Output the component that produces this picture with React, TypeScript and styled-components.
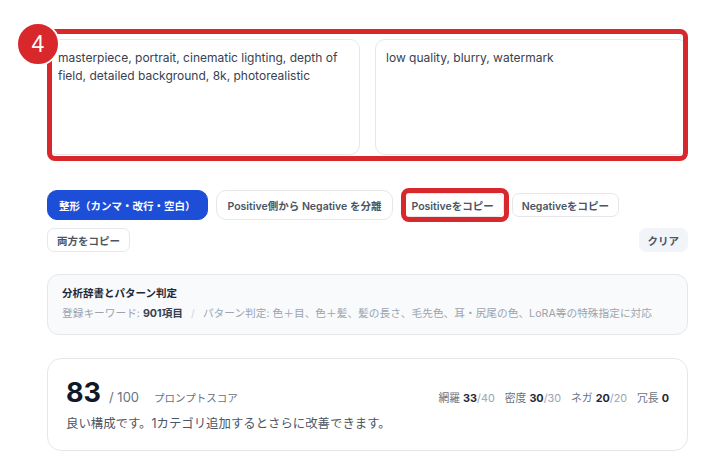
import { createGlobalStyle, styled } from 'styled-components';

const GlobalStyle = createGlobalStyle`
  body {
    margin: 0;
    background: #ffffff;
    font-family: Inter, "Noto Sans CJK JP", sans-serif;
    color: #1f2937;
  }
`;

const Page = styled.div`
  width: 641px;
  padding: 39px 32px 0 47px;
`;

const EditorGrid = styled.div`
  position: relative;
  display: grid;
  grid-template-columns: 1fr 1fr;
  gap: 15px;
`;

const PromptBox = styled.textarea`
  box-sizing: border-box;
  height: 116px;
  padding: 9px 10px;
  border: 1px solid #e5e7eb;
  border-radius: 10px;
  resize: none;
  font-family: Inter, "Noto Sans CJK JP", sans-serif;
  font-size: 12px;
  line-height: 18px;
  color: #374151;
  background: #ffffff;
  outline: none;
`;

const Highlight = styled.div<{ $inset: string }>`
  position: absolute;
  inset: ${(p) => p.$inset};
  border: 5px solid #d9282c;
  border-radius: 8px;
  pointer-events: none;
`;

const StepBadge = styled.div`
  position: absolute;
  left: -31px;
  top: -17px;
  width: 40px;
  height: 40px;
  border-radius: 50%;
  border: 2px solid #ffffff;
  background: #d9282c;
  color: #ffffff;
  font-family: "Liberation Sans", Arial, sans-serif;
  font-size: 23px;
  display: flex;
  align-items: center;
  justify-content: center;
`;

const Toolbar = styled.div`
  margin-top: 35px;
  display: flex;
  flex-wrap: wrap;
  align-items: center;
  gap: 8px;
`;

type Variant = 'primary' | 'outline' | 'small' | 'muted';

const isLarge = (v?: Variant) => v === 'primary' || v === 'outline';

const Button = styled.button<{ $variant?: Variant }>`
  position: relative;
  box-sizing: border-box;
  font-family: Inter, "Noto Sans CJK JP", sans-serif;
  font-weight: 600;
  font-size: 10.5px;
  cursor: pointer;
  white-space: nowrap;
  height: ${(p) => (isLarge(p.$variant) ? '30px' : '24px')};
  padding: ${(p) => (isLarge(p.$variant) ? '0 11px' : '0 9px')};
  border-radius: ${(p) => (isLarge(p.$variant) ? '10px' : '7px')};
  border: 1px solid
    ${(p) => (p.$variant === 'primary' ? '#1d4ed8' : p.$variant === 'muted' ? '#f1f5f9' : '#e5e7eb')};
  background: ${(p) => (p.$variant === 'primary' ? '#1d4ed8' : p.$variant === 'muted' ? '#f1f5f9' : '#ffffff')};
  color: ${(p) => (p.$variant === 'primary' ? '#ffffff' : '#4b5563')};
  ${(p) => p.$variant === 'muted' && 'margin-left: auto; padding: 0 8px;'}
`;

const InfoCard = styled.div`
  margin-top: 22px;
  padding: 11px 14px 12px;
  border: 1px solid #e5e7eb;
  border-radius: 12px;
  background: #f8fafc;
  display: flex;
  flex-direction: column;
  gap: 4px;
`;

const InfoTitle = styled.div`
  font-size: 10.5px;
  line-height: 16px;
  font-weight: 700;
  color: #1f2937;
`;

const InfoLine = styled.div`
  font-size: 10.7px;
  line-height: 16px;
  color: #9ca3af;
  white-space: nowrap;
`;

const Strong = styled.b`
  font-weight: 700;
  color: #374151;
`;

const Slash = styled.span`
  margin: 0 8px;
  color: #d1d5db;
`;

const ScoreCard = styled.div`
  margin-top: 23px;
  padding: 18px 18px 17px;
  border: 1px solid #e5e7eb;
  border-radius: 14px;
  background: #ffffff;
  display: flex;
  flex-direction: column;
  gap: 6px;
`;

const ScoreRow = styled.div`
  display: flex;
  align-items: baseline;
  height: 32px;
`;

const ScoreValue = styled.span`
  font-size: 27px;
  line-height: 32px;
  font-weight: 700;
  color: #111827;
`;

const ScoreMax = styled.span`
  margin-left: 8px;
  font-size: 13px;
  color: #6b7280;
`;

const ScoreLabel = styled.span`
  margin-left: 15px;
  font-size: 10.5px;
  color: #6b7280;
`;

const Stats = styled.div`
  margin-left: auto;
  display: flex;
  gap: 10px;
  font-size: 10.8px;
`;

const Stat = styled.span`
  color: #6b7280;
`;

const StatNum = styled.b`
  font-weight: 700;
  color: #1f2937;
`;

const StatMax = styled.span`
  color: #9ca3af;
`;

const Summary = styled.div`
  font-size: 12.4px;
  line-height: 18px;
  color: #4b5563;
`;

const stats = [
  { label: '網羅', value: 33, max: 40 },
  { label: '密度', value: 30, max: 30 },
  { label: 'ネガ', value: 20, max: 20 },
  { label: '冗長', value: 0 },
];

export default function App() {
  return (
    <>
      <GlobalStyle />
      <Page>
        <EditorGrid>
          <PromptBox
            readOnly
            value="masterpiece, portrait, cinematic lighting, depth of field, detailed background, 8k, photorealistic"
          />
          <PromptBox readOnly value="low quality, blurry, watermark" />
          <Highlight $inset="-10px 0 -6px 0" />
          <StepBadge>4</StepBadge>
        </EditorGrid>

        <Toolbar>
          <Button $variant="primary">整形（カンマ・改行・空白）</Button>
          <Button $variant="outline">Positive側から Negative を分離</Button>
          <Button $variant="small">
            Positiveをコピー
            <Highlight $inset="-6px -6px -6px -1px" />
          </Button>
          <Button $variant="small">Negativeをコピー</Button>
          <Button $variant="small">両方をコピー</Button>
          <Button $variant="muted">クリア</Button>
        </Toolbar>

        <InfoCard>
          <InfoTitle>分析辞書とパターン判定</InfoTitle>
          <InfoLine>
            登録キーワード: <Strong>901項目</Strong>
            <Slash>/</Slash>
            パターン判定: 色＋目、色＋髪、髪の長さ、毛先色、耳・尻尾の色、LoRA等の特殊指定に対応
          </InfoLine>
        </InfoCard>

        <ScoreCard>
          <ScoreRow>
            <ScoreValue>83</ScoreValue>
            <ScoreMax>/ 100</ScoreMax>
            <ScoreLabel>プロンプトスコア</ScoreLabel>
            <Stats>
              {stats.map((s) => (
                <Stat key={s.label}>
                  {s.label} <StatNum>{s.value}</StatNum>
                  {s.max !== undefined && <StatMax>/{s.max}</StatMax>}
                </Stat>
              ))}
            </Stats>
          </ScoreRow>
          <Summary>良い構成です。1カテゴリ追加するとさらに改善できます。</Summary>
        </ScoreCard>
      </Page>
    </>
  );
}
